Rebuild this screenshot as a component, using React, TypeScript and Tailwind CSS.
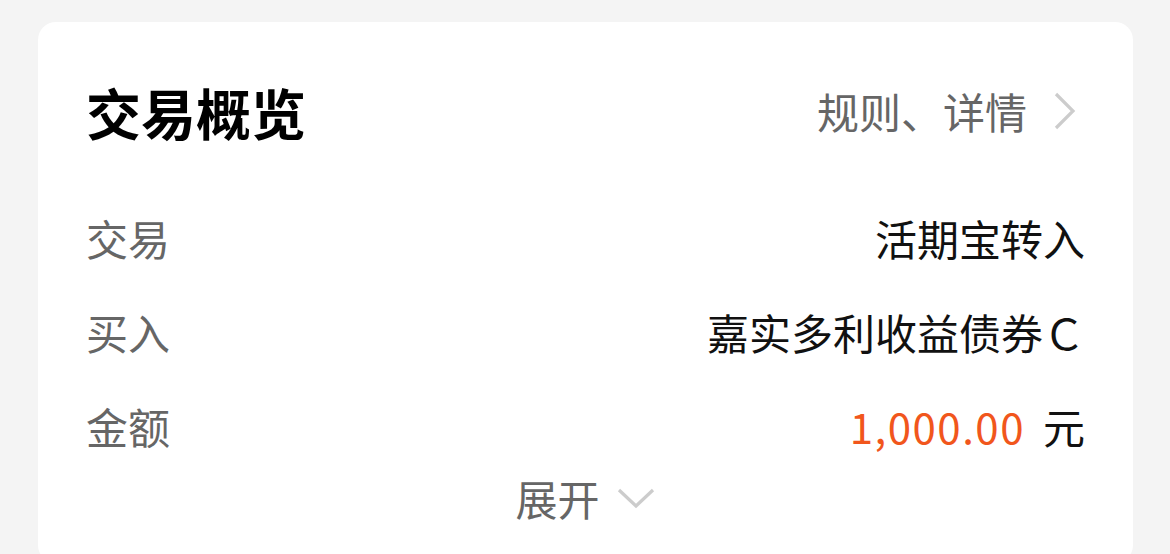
const rows = [
  { label: '交易', value: '活期宝转入' },
  { label: '买入', value: '嘉实多利收益债券Ｃ' },
]

export default function App() {
  return (
    <div
      className="h-[554px] overflow-hidden bg-[#f4f4f4] pt-[22px] pl-[38px] pr-[37px]"
      style={{ fontFamily: '"Noto Sans CJK SC", "Noto Sans", sans-serif' }}
    >
      <div className="rounded-[18px] bg-white px-12 pt-[61px] pb-10">
        <div className="flex h-[56px] items-center justify-between">
          <h1 className="text-[55px] font-bold leading-none text-black">交易概览</h1>
          <div className="flex items-center gap-[24px] text-[42px] leading-none text-[#666666]">
            <span>规则、详情</span>
            <svg width="26" height="40" viewBox="0 0 26 40" className="mr-[8px]">
              <path d="M5 3 L22 20 L5 37" fill="none" stroke="#cccccc" strokeWidth="3.2" />
            </svg>
          </div>
        </div>

        <div className="mt-[52px] flex flex-col">
          {rows.map((r) => (
            <div key={r.label} className="flex h-[94px] items-center justify-between text-[42px] leading-none">
              <span className="text-[#666666]">{r.label}</span>
              <span className="text-[#111111]">{r.value}</span>
            </div>
          ))}
          <div className="flex h-[94px] items-center justify-between text-[42px] leading-none">
            <span className="text-[#666666]">金额</span>
            <span className="flex items-center gap-[18px]">
              <span className="tracking-[1.5px] text-[#f1561c]">1,000.00</span>
              <span className="text-[#111111]">元</span>
            </span>
          </div>
          <div className="flex h-[50px] items-center justify-center gap-4 text-[42px] leading-none text-[#666666]">
            <span>展开</span>
            <svg width="40" height="24" viewBox="0 0 40 24">
              <path d="M3 4 L20 20 L37 4" fill="none" stroke="#cccccc" strokeWidth="3.2" />
            </svg>
          </div>
        </div>
      </div>
    </div>
  )
}
